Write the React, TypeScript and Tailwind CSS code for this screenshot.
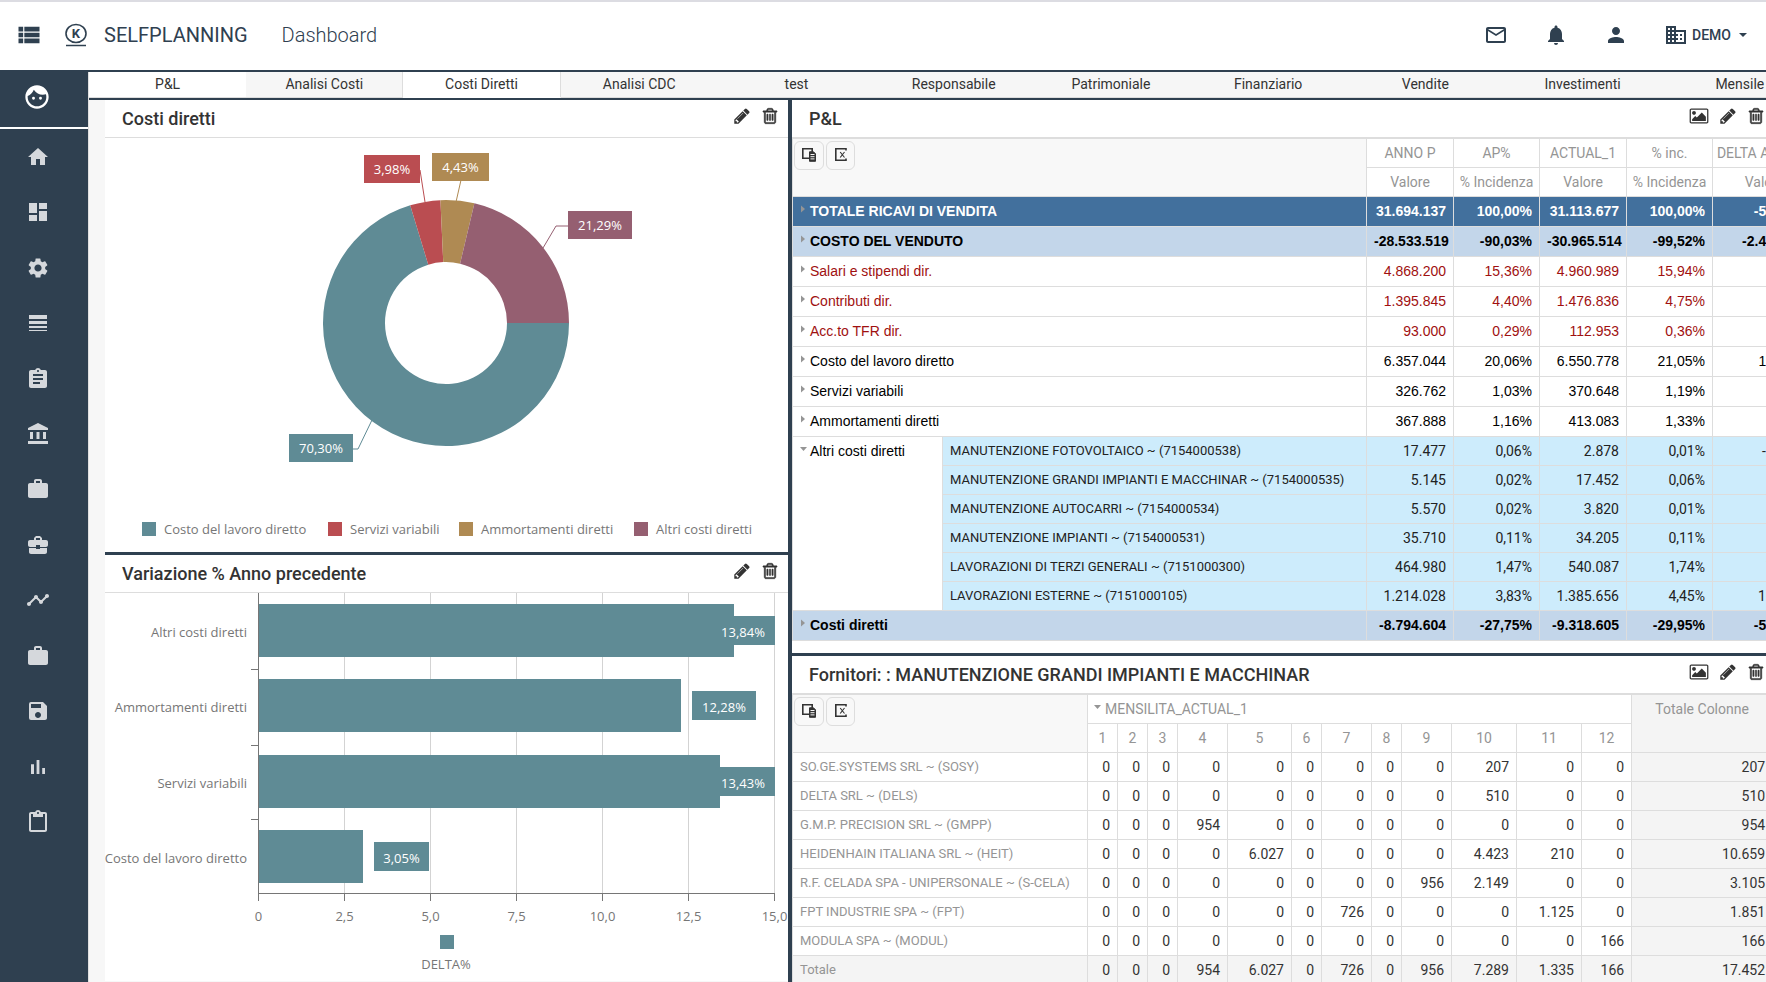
import type { ReactNode } from "react";
import clsx from "clsx";
import {
  MdAccountBalance,
  MdAssignment,
  MdBusiness,
  MdBusinessCenter,
  MdContentPaste,
  MdDashboard,
  MdFace,
  MdHome,
  MdLineWeight,
  MdMailOutline,
  MdNotifications,
  MdPerson,
  MdSave,
  MdSettings,
  MdTimeline,
  MdViewList,
  MdWork,
} from "react-icons/md";

type PnlRow = {
  label: string;
  tone: "total" | "subtotal" | "red" | "plain";
  values: string[];
};

const TABS = [
  "P&L",
  "Analisi Costi",
  "Costi Diretti",
  "Analisi CDC",
  "test",
  "Responsabile",
  "Patrimoniale",
  "Finanziario",
  "Vendite",
  "Investimenti",
  "Mensile",
];

const PNL_ROWS: PnlRow[] = [
  { label: "TOTALE RICAVI DI VENDITA", tone: "total", values: ["31.694.137", "100,00%", "31.113.677", "100,00%", "-580.460"] },
  { label: "COSTO DEL VENDUTO", tone: "subtotal", values: ["-28.533.519", "-90,03%", "-30.965.514", "-99,52%", "-2.431.995"] },
  { label: "Salari e stipendi dir.", tone: "red", values: ["4.868.200", "15,36%", "4.960.989", "15,94%", "92.789"] },
  { label: "Contributi dir.", tone: "red", values: ["1.395.845", "4,40%", "1.476.836", "4,75%", "80.991"] },
  { label: "Acc.to TFR dir.", tone: "red", values: ["93.000", "0,29%", "112.953", "0,36%", "19.953"] },
  { label: "Costo del lavoro diretto", tone: "plain", values: ["6.357.044", "20,06%", "6.550.778", "21,05%", "193.734"] },
  { label: "Servizi variabili", tone: "plain", values: ["326.762", "1,03%", "370.648", "1,19%", "43.886"] },
  { label: "Ammortamenti diretti", tone: "plain", values: ["367.888", "1,16%", "413.083", "1,33%", "45.195"] },
];

const PNL_TOTAL: PnlRow = {
  label: "Costi diretti",
  tone: "subtotal",
  values: ["-8.794.604", "-27,75%", "-9.318.605", "-29,95%", "-524.001"],
};

const PNL_DETAILS = [
  { label: "MANUTENZIONE FOTOVOLTAICO ~ (7154000538)", values: ["17.477", "0,06%", "2.878", "0,01%", "-14.599"] },
  { label: "MANUTENZIONE GRANDI IMPIANTI E MACCHINAR ~ (7154000535)", values: ["5.145", "0,02%", "17.452", "0,06%", "12.307"] },
  { label: "MANUTENZIONE AUTOCARRI ~ (7154000534)", values: ["5.570", "0,02%", "3.820", "0,01%", "-1.750"] },
  { label: "MANUTENZIONE IMPIANTI ~ (7154000531)", values: ["35.710", "0,11%", "34.205", "0,11%", "-1.505"] },
  { label: "LAVORAZIONI DI TERZI GENERALI ~ (7151000300)", values: ["464.980", "1,47%", "540.087", "1,74%", "75.107"] },
  { label: "LAVORAZIONI ESTERNE ~ (7151000105)", values: ["1.214.028", "3,83%", "1.385.656", "4,45%", "171.628"] },
];

const PNL_HEADS = [
  ["ANNO P", "Valore"],
  ["AP%", "% Incidenza"],
  ["ACTUAL_1", "Valore"],
  ["% inc.", "% Incidenza"],
  ["DELTA ACTUAL", "Valore"],
];

const SUPPLIERS = [
  { name: "SO.GE.SYSTEMS SRL ~ (SOSY)", values: ["0", "0", "0", "0", "0", "0", "0", "0", "0", "207", "0", "0", "207"] },
  { name: "DELTA SRL ~ (DELS)", values: ["0", "0", "0", "0", "0", "0", "0", "0", "0", "510", "0", "0", "510"] },
  { name: "G.M.P. PRECISION SRL ~ (GMPP)", values: ["0", "0", "0", "954", "0", "0", "0", "0", "0", "0", "0", "0", "954"] },
  { name: "HEIDENHAIN ITALIANA SRL ~ (HEIT)", values: ["0", "0", "0", "0", "6.027", "0", "0", "0", "0", "4.423", "210", "0", "10.659"] },
  { name: "R.F. CELADA SPA - UNIPERSONALE ~ (S-CELA)", values: ["0", "0", "0", "0", "0", "0", "0", "0", "956", "2.149", "0", "0", "3.105"] },
  { name: "FPT INDUSTRIE SPA ~ (FPT)", values: ["0", "0", "0", "0", "0", "0", "726", "0", "0", "0", "1.125", "0", "1.851"] },
  { name: "MODULA SPA ~ (MODUL)", values: ["0", "0", "0", "0", "0", "0", "0", "0", "0", "0", "0", "166", "166"] },
  { name: "Totale", values: ["0", "0", "0", "954", "6.027", "0", "726", "0", "956", "7.289", "1.335", "166", "17.452"] },
];

const TEAL = "#5f8b95";
const RED = "#ba4d51";
const GOLD = "#af8a53";
const PLUM = "#955f71";

const BarsIcon = () => (
  <svg viewBox="0 0 24 24" width="24" height="24" fill="currentColor">
    <path d="M5 9.2h3V19H5zM10.6 5h2.8v14h-2.8zm5.6 8H19v6h-2.8z" />
  </svg>
);

const NAV: { name: string; icon: ReactNode }[] = [
  { name: "Home", icon: <MdHome size={24} /> },
  { name: "Dashboard", icon: <MdDashboard size={24} /> },
  { name: "Impostazioni", icon: <MdSettings size={24} /> },
  { name: "Righe", icon: <MdLineWeight size={24} /> },
  { name: "Report", icon: <MdAssignment size={24} /> },
  { name: "Banche", icon: <MdAccountBalance size={24} /> },
  { name: "Lavoro", icon: <MdWork size={24} /> },
  { name: "Business", icon: <MdBusinessCenter size={24} /> },
  { name: "Andamento", icon: <MdTimeline size={24} /> },
  { name: "Budget", icon: <MdWork size={24} /> },
  { name: "Salva", icon: <MdSave size={24} /> },
  { name: "Grafici", icon: <BarsIcon /> },
  { name: "Appunti", icon: <MdContentPaste size={24} /> },
];

const PencilIcon = () => (
  <svg viewBox="0 0 1792 1792" width="18" height="18" fill="currentColor">
    <path d="M491 1536l91-91-235-235-91 91v107h128v128h107zm523-928q0-22-22-22-10 0-17 7l-542 542q-7 7-7 17 0 22 22 22 10 0 17-7l542-542q7-7 7-17zm-54-192l416 416-832 832h-416v-416zm683 96q0 53-37 90l-166 166-416-416 166-165q36-38 90-38 53 0 91 38l235 234q37 39 37 91z" />
  </svg>
);

const TrashIcon = () => (
  <svg viewBox="0 0 1792 1792" width="18" height="18" fill="currentColor" stroke="currentColor" strokeWidth="50">
    <path d="M704 736v576q0 14-9 23t-23 9h-64q-14 0-23-9t-9-23v-576q0-14 9-23t23-9h64q14 0 23 9t9 23zm256 0v576q0 14-9 23t-23 9h-64q-14 0-23-9t-9-23v-576q0-14 9-23t23-9h64q14 0 23 9t9 23zm256 0v576q0 14-9 23t-23 9h-64q-14 0-23-9t-9-23v-576q0-14 9-23t23-9h64q14 0 23 9t9 23zm128 724v-948h-896v948q0 22 7 40.5t14.5 27 10.5 8.5h832q3 0 10.5-8.5t14.5-27 7-40.5zm-672-1076h448l-48-117q-7-9-17-11h-317q-10 2-17 11zm928 32v64q0 14-9 23t-23 9h-96v948q0 83-47 143.5t-113 60.5h-832q-66 0-113-58.5t-47-141.5v-952h-96q-14 0-23-9t-9-23v-64q0-14 9-23t23-9h309l70-167q15-37 54-63t79-26h320q40 0 79 26t54 63l70 167h309q14 0 23 9t9 23z" />
  </svg>
);

const PictureIcon = () => (
  <svg viewBox="0 0 2048 1792" width="20" height="18" fill="currentColor">
    <path d="M704 576q0 80-56 136t-136 56-136-56-56-136 56-136 136-56 136 56 56 136zm1024 384v448h-1408v-192l320-320 160 160 512-512zm96-704h-1600q-13 0-22.5 9.5t-9.5 22.5v1216q0 13 9.5 22.5t22.5 9.5h1600q13 0 22.5-9.5t9.5-22.5v-1216q0-13-9.5-22.5t-22.5-9.5zm160 32v1216q0 66-47 113t-113 47h-1600q-66 0-113-47t-47-113v-1216q0-66 47-113t113-47h1600q66 0 113 47t47 113z" />
  </svg>
);

const ChooserIcon = () => (
  <svg viewBox="0 0 16 16" width="16" height="16" fill="none" stroke="#333" strokeWidth="1.6">
    <path d="M8 11.2H1.8V1.8h9.4V5" />
    <path d="M8.500 4.800h4l2 2v7.500h-6z" fill="#333" strokeWidth="1" />
    <path d="M9.500 7.500h4M9.500 9.700h4M9.500 11.900h4" stroke="#f8f8f8" strokeWidth="1" />
  </svg>
);

const ExportIcon = () => (
  <svg viewBox="0 0 16 16" width="16" height="16" fill="none" stroke="#333">
    <path d="M13 3.5V1.8H2.8v11.4H13V11.500" strokeWidth="1.6" />
    <path d="M7.200 5l4.300 5.500M11.500 5L7.200 10.500" strokeWidth="1.1" />
  </svg>
);

const ArrowRight = () => (
  <svg viewBox="0 0 8 8" width="8" height="8" className="mt-1 shrink-0" fill="#959595">
    <path d="M1 0.500l4 3.500-4 3.500z" />
  </svg>
);

const ArrowDown = () => (
  <svg viewBox="0 0 8 8" width="8" height="8" className="mt-1 shrink-0" fill="#959595">
    <path d="M0 2h7L3.500 6z" />
  </svg>
);

const Logo = () => (
  <svg viewBox="0 0 24 24" width="24" height="24" fill="none" stroke="#2f4050">
    <ellipse cx="12" cy="10.500" rx="10" ry="9" strokeWidth="1.600" />
    <path d="M2 22.500h20" strokeWidth="1.500" />
    <text x="12" y="15" textAnchor="middle" fill="#2f4050" stroke="none" className="text-[13px] font-bold">
      K
    </text>
  </svg>
);

const Header = () => (
  <header className="flex h-[72px] shrink-0 items-center border-t-2 border-b-2 border-t-[#dcdce2] border-b-[#2f4050] bg-white pr-[19px] pb-0.5 pl-[15px] text-[#2f4050]">
    <button aria-label="Menu">
      <MdViewList size={28} />
    </button>
    <div className="ml-[21px]">
      <Logo />
    </div>
    <span className="ml-4 text-xl">SELFPLANNING</span>
    <h1 className="ml-[34px] text-xl font-light">Dashboard</h1>
    <div className="ml-auto flex items-center gap-9">
      <button aria-label="Messaggi">
        <MdMailOutline size={24} />
      </button>
      <button aria-label="Notifiche">
        <MdNotifications size={24} />
      </button>
      <button aria-label="Profilo">
        <MdPerson size={24} />
      </button>
      <button className="flex items-center gap-1 text-sm font-medium">
        <MdBusiness size={24} />
        DEMO
        <svg viewBox="0 0 8 4" width="8" height="4" className="ml-1" fill="currentColor">
          <path d="M0 0h8L4 4z" />
        </svg>
      </button>
    </div>
  </header>
);

const Sidebar = () => (
  <aside className="w-[89px] shrink-0 border-r border-[#e0e0e0] bg-[#2f4050]">
    <div className="flex h-[57px] items-center border-b-2 border-white pb-1.5 pl-[23px] text-white">
      <MdFace size={28} />
    </div>
    <nav className="grid h-[721px] auto-rows-fr pl-[26px] text-[#d5d8dc]">
      {NAV.map((item) => (
        <a key={item.name} href="#" aria-label={item.name} className="flex items-center">
          {item.icon}
        </a>
      ))}
    </nav>
  </aside>
);

const Tabs = () => (
  <div className="flex h-7 shrink-0 overflow-hidden border-b-2 border-[#2f4050] bg-[#f6f6f6]">
    {TABS.map((tab, i) => (
      <button
        key={tab}
        className={clsx(
          "w-[9.375%] shrink-0 border-b pb-0.5 text-sm text-[#333]",
          i === 2 ? "border-b-white bg-white" : "border-b-[#ddd]",
          i === 0 && "bg-white",
          (i === 1 || i === 2) && "border-r border-r-[#ddd]"
        )}
      >
        {tab}
      </button>
    ))}
  </div>
);

const PanelHeader = ({ title, picture = false }: { title: string; picture?: boolean }) => (
  <div
    className={clsx(
      "flex h-[38px] items-center justify-between border-b border-[#ddd] bg-white pl-[17px] text-[#333]",
      picture ? "pr-px" : "pr-[9px]"
    )}
  >
    <h2 className="text-lg font-medium">{title}</h2>
    <div className="flex items-center gap-[10px] pb-1.5">
      {picture && (
        <button aria-label="Esporta immagine">
          <PictureIcon />
        </button>
      )}
      <button aria-label="Modifica">
        <PencilIcon />
      </button>
      <button aria-label="Elimina">
        <TrashIcon />
      </button>
    </div>
  </div>
);

const CX = 341;
const CY = 185;
const R_OUT = 123;
const R_IN = 61;

const SLICES = [
  { name: "Costo del lavoro diretto", pct: 70.3, text: "70,30%", color: TEAL, box: [184, 296, 64], line: "M248 311h5l14-29", legend: 37 },
  { name: "Servizi variabili", pct: 3.98, text: "3,98%", color: RED, box: [259, 17, 56], line: "M314 32h1l5 32", legend: 223 },
  { name: "Ammortamenti diretti", pct: 4.43, text: "4,43%", color: GOLD, box: [327, 15, 57], line: "M356 42l-5 22", legend: 354 },
  { name: "Altri costi diretti", pct: 21.29, text: "21,29%", color: PLUM, box: [463, 73, 64], line: "M463 88h-12l-13 22", legend: 529 },
];

const slicePath = (from: number, to: number) => {
  const a = (from / 100) * Math.PI * 2;
  const b = (to / 100) * Math.PI * 2;
  const large = to - from > 50 ? 1 : 0;
  const p = (r: number, t: number) => `${CX + r * Math.cos(t)} ${CY + r * Math.sin(t)}`;
  return `M${p(R_OUT, a)}A${R_OUT} ${R_OUT} 0 ${large} 1 ${p(R_OUT, b)}L${p(R_IN, b)}A${R_IN} ${R_IN} 0 ${large} 0 ${p(R_IN, a)}Z`;
};

const DonutChart = () => {
  let start = 0;
  return (
    <svg viewBox="0 0 683 414" className="block w-full font-['Open_Sans',sans-serif] text-[13px]">
      {SLICES.map((s) => {
        const from = start;
        start += s.pct;
        const [x, y, w] = s.box;
        return (
          <g key={s.name}>
            <path d={slicePath(from, start)} fill={s.color} />
            <path d={s.line} fill="none" stroke={s.color} />
            <rect x={x} y={y} width={w} height="28" fill={s.color} />
            <text x={x + w / 2} y={y + 19} textAnchor="middle" fill="#fff">
              {s.text}
            </text>
            <rect x={s.legend} y="384" width="14" height="14" fill={s.color} />
            <text x={s.legend + 22} y="396" fill="#767676">
              {s.name}
            </text>
          </g>
        );
      })}
    </svg>
  );
};

const BARS = [
  { name: "Altri costi diretti", text: "13,84%", y: 11, w: 476, label: [606, 64] },
  { name: "Ammortamenti diretti", text: "12,28%", y: 86, w: 423, label: [587, 64] },
  { name: "Servizi variabili", text: "13,43%", y: 162, w: 462, label: [606, 64] },
  { name: "Costo del lavoro diretto", text: "3,05%", y: 237, w: 105, label: [269, 55] },
];

const AXIS = ["0", "2,5", "5,0", "7,5", "10,0", "12,5", "15,0"];

const BarChart = () => (
  <svg viewBox="0 0 683 388" className="block w-full font-['Open_Sans',sans-serif] text-[13px]">
    {AXIS.map((tick, i) => (
      <g key={tick}>
        {i > 0 && <path d={`M${153.5 + i * 86} 0v300`} stroke="#d3d3d3" />}
        <path d={`M${153.5 + i * 86} 300v8`} stroke="#767676" />
        <text x={153.5 + i * 86} y="328" textAnchor="middle" fill="#767676">
          {tick}
        </text>
      </g>
    ))}
    {BARS.map((bar) => {
      const [x, w] = bar.label;
      return (
        <g key={bar.name}>
          <rect x="153" y={bar.y} width={bar.w} height="53" fill={TEAL} />
          <rect x={x} y={bar.y + 12} width={w} height="29" fill={TEAL} />
          <text x={x + w / 2} y={bar.y + 33} textAnchor="middle" fill="#fff">
            {bar.text}
          </text>
          <text x="142" y={bar.y + 33} textAnchor="end" fill="#767676">
            {bar.name}
          </text>
        </g>
      );
    })}
    <path d="M153.500 0v300.500H670M146 76.500h7M146 152.500h7M146 226.500h7" fill="none" stroke="#767676" />
    <rect x="335" y="342" width="14" height="14" fill={TEAL} />
    <text x="341" y="376" textAnchor="middle" fill="#767676">
      DELTA%
    </text>
  </svg>
);

const TableTools = () => (
  <div className="flex gap-0.5 pt-0.5 pl-px">
    <button aria-label="Scelta campi" className="flex h-[29px] w-[30px] items-center justify-center rounded-md border border-[#ddd] pb-0.5">
      <ChooserIcon />
    </button>
    <button aria-label="Esporta in Excel" className="flex h-[29px] w-[29px] items-center justify-center rounded-md border border-[#ddd] pb-0.5">
      <ExportIcon />
    </button>
  </div>
);

const ROW_TONES = {
  total: "bg-[#42709d] text-white",
  subtotal: "bg-[#c3d6ea] text-black",
  red: "text-[#a01010]",
  plain: "text-black",
};

const CELL = "border-r border-b border-[#ddd] px-[7px] pt-0";
const HEAD = "h-[29px] border-r border-b border-[#ddd] p-0 text-center font-normal text-[#959595]";

const PnlLine = ({ row }: { row: PnlRow }) => {
  const weight = row.tone === "total" || row.tone === "subtotal" ? "font-bold" : "font-normal";
  return (
    <tr className={clsx("h-[30px] font-['Liberation_Sans',Arial,sans-serif]", ROW_TONES[row.tone])}>
      <th colSpan={2} scope="row" className={clsx(CELL, weight, "pb-0.5 text-left")}>
        <div className="flex gap-0.5">
          <ArrowRight />
          <span>{row.label}</span>
        </div>
      </th>
      {row.values.map((v, i) => (
        <td key={i} className={clsx(CELL, weight, "pb-0.5 text-right")}>
          {v}
        </td>
      ))}
    </tr>
  );
};

const PnlTable = () => (
  <table className="w-[1025px] table-fixed border-separate border-spacing-0 border-t border-l border-[#ddd] bg-white text-sm whitespace-nowrap">
    <colgroup>
      <col className="w-[150px]" />
      <col className="w-[424px]" />
      <col className="w-[87px]" />
      <col className="w-[86px]" />
      <col className="w-[87px]" />
      <col className="w-[86px]" />
      <col className="w-[104px]" />
    </colgroup>
    <thead>
      <tr>
        <td colSpan={2} rowSpan={2} className="border-r border-b border-[#ddd] bg-[#f8f8f8] p-0 align-top">
          <TableTools />
        </td>
        {PNL_HEADS.map(([top]) => (
          <th key={top} className={HEAD}>
            {top}
          </th>
        ))}
      </tr>
      <tr>
        {PNL_HEADS.map(([top, sub]) => (
          <th key={top} className={HEAD}>
            {sub}
          </th>
        ))}
      </tr>
    </thead>
    <tbody>
      {PNL_ROWS.map((row) => (
        <PnlLine key={row.label} row={row} />
      ))}
      {PNL_DETAILS.map((row, i) => (
        <tr key={row.label} className="h-[29px] bg-[#cdecfc] text-[#222]">
          {i === 0 && (
            <th
              rowSpan={PNL_DETAILS.length}
              scope="rowgroup"
              className="border-r border-b border-[#ddd] bg-white px-[7px] pt-1 text-left align-top font-['Liberation_Sans',Arial,sans-serif] font-normal text-black"
            >
              <div className="flex gap-0.5">
                <ArrowDown />
                <span>Altri costi diretti</span>
              </div>
            </th>
          )}
          <th scope="row" className={clsx(CELL, "text-left text-[13px] font-normal")}>
            {row.label}
          </th>
          {row.values.map((v, j) => (
            <td key={j} className={clsx(CELL, "text-right")}>
              {v}
            </td>
          ))}
        </tr>
      ))}
      <PnlLine row={PNL_TOTAL} />
    </tbody>
  </table>
);

const SupplierTable = () => (
  <table className="w-[981px] table-fixed border-separate border-spacing-0 border-t border-l border-[#ddd] bg-white text-sm whitespace-nowrap">
    <colgroup>
      <col className="w-[295px]" />
      <col className="w-[30px]" />
      <col className="w-[30px]" />
      <col className="w-[30px]" />
      <col className="w-[50px]" />
      <col className="w-[64px]" />
      <col className="w-[30px]" />
      <col className="w-[50px]" />
      <col className="w-[30px]" />
      <col className="w-[50px]" />
      <col className="w-[65px]" />
      <col className="w-[65px]" />
      <col className="w-[50px]" />
      <col className="w-[141px]" />
    </colgroup>
    <thead>
      <tr>
        <td rowSpan={2} className="border-r border-b border-[#ddd] bg-[#f8f8f8] p-0 align-top">
          <TableTools />
        </td>
        <th colSpan={12} className={HEAD}>
          <div className="flex gap-[3px] px-[6px]">
            <ArrowDown />
            <span>MENSILITA_ACTUAL_1</span>
          </div>
        </th>
        <th rowSpan={2} className="border-r border-b border-[#ddd] bg-[#f4f4f4] pt-1 text-center align-top font-normal text-[#959595]">
          Totale Colonne
        </th>
      </tr>
      <tr>
        {Array.from({ length: 12 }, (_, i) => (
          <th key={i} className={HEAD}>
            {i + 1}
          </th>
        ))}
      </tr>
    </thead>
    <tbody>
      {SUPPLIERS.map((row) => (
        <tr key={row.name} className={clsx("h-[29px] text-[#333]", row.name === "Totale" && "bg-[#f4f4f4]")}>
          <th scope="row" className={clsx(CELL, "text-left text-[13px] font-normal text-[#959595]")}>
            {row.name}
          </th>
          {row.values.map((v, i) => (
            <td key={i} className={clsx(CELL, "text-right", i === 12 && "bg-[#f4f4f4]")}>
              {v}
            </td>
          ))}
        </tr>
      ))}
    </tbody>
  </table>
);

export default function App() {
  return (
    <div className="flex h-screen flex-col overflow-hidden bg-[#f7f7f7] font-['Roboto',sans-serif]">
      <Header />
      <div className="flex min-h-0 flex-1">
        <Sidebar />
        <div className="flex min-w-0 flex-1 flex-col">
          <Tabs />
          <main className="grid min-h-0 flex-1 grid-cols-[703fr_974fr]">
            <div className="min-w-0 overflow-hidden border-r-4 border-[#2f4050] pl-4">
              <section className="border-b-[3px] border-[#2f4050] bg-white">
                <PanelHeader title="Costi diretti" />
                <DonutChart />
              </section>
              <section className="bg-white">
                <PanelHeader title="Variazione % Anno precedente" />
                <BarChart />
              </section>
            </div>
            <div className="min-w-0 overflow-hidden bg-white">
              <section className="border-b-[3px] border-[#2f4050] pb-3">
                <PanelHeader title="P&L" picture />
                <PnlTable />
              </section>
              <section>
                <PanelHeader title="Fornitori: : MANUTENZIONE GRANDI IMPIANTI E MACCHINAR" picture />
                <SupplierTable />
              </section>
            </div>
          </main>
        </div>
      </div>
    </div>
  );
}
